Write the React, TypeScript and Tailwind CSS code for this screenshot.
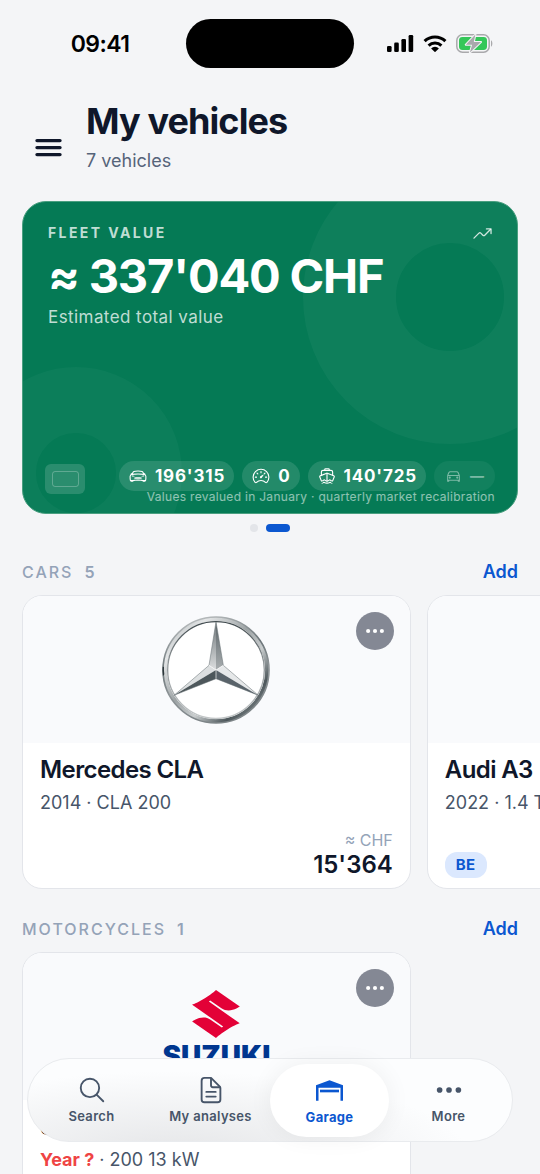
import type { ReactNode } from "react";
import {
  IoBoatOutline,
  IoCarOutline,
  IoCarSportOutline,
  IoDocumentTextOutline,
  IoEllipsisHorizontal,
  IoSearchOutline,
  IoSpeedometerOutline,
  IoTrendingUpOutline,
} from "react-icons/io5";
import { SiSuzuki } from "react-icons/si";

function StatusBar() {
  return (
    <div className="grid shrink-0 grid-cols-[1fr_168px_1fr] items-center pt-[19px] text-black">
      <span className="pl-[14px] text-center text-[23px] leading-7 font-semibold tracking-tight">09:41</span>
      <div className="h-[49px] rounded-full bg-black" />
      <div className="flex items-center justify-center gap-[9px] pr-[14px]">
        <svg className="h-[17px] w-[27px]" viewBox="0 0 27 17" fill="currentColor" aria-hidden="true">
          <rect x="0" y="11" width="4.6" height="6" rx="1.3" />
          <rect x="7.2" y="7.6" width="4.6" height="9.4" rx="1.3" />
          <rect x="14.4" y="4" width="4.6" height="13" rx="1.3" />
          <rect x="21.6" y="0" width="4.6" height="17" rx="1.3" />
        </svg>
        <svg className="h-[17px] w-6" viewBox="0 0 24 17" fill="none" stroke="currentColor" aria-hidden="true">
          <path d="M1.6 6.2a15 15 0 0 1 20.8 0" strokeWidth="3.1" />
          <path d="M5.6 10.6a9.2 9.2 0 0 1 12.8 0" strokeWidth="3" />
          <path d="M8.1 13.4a5.6 5.6 0 0 1 7.8 0L12 17.2Z" fill="currentColor" stroke="none" />
        </svg>
        <svg className="h-[19px] w-[37px]" viewBox="0 0 37 19" aria-hidden="true">
          <rect x="0.8" y="0.8" width="32.4" height="17.4" rx="5.6" fill="none" stroke="#a9a9ac" strokeWidth="1.5" />
          <path d="M35 6.3c1.8.8 1.8 5.6 0 6.4Z" fill="#a9a9ac" />
          <rect x="3" y="3" width="28" height="13" rx="3.4" fill="#34c759" />
          <path
            d="M19.4.6 9.8 10.7h6.3l-2.2 7.8L25 8h-7.2Z"
            fill="#a9a9ac"
            stroke="#f4f5f7"
            strokeWidth="2"
            strokeLinejoin="round"
            paintOrder="stroke"
          />
        </svg>
      </div>
    </div>
  );
}

function ValuePill({ icon, value, muted = false }: { icon: ReactNode; value: string; muted?: boolean }) {
  return (
    <li
      className={
        muted
          ? "flex h-[30px] items-center gap-2 rounded-full bg-white/5 px-[11px] text-sm font-bold text-white/45"
          : "flex h-[30px] items-center gap-2 rounded-full bg-white/12 pr-[9px] pl-[10px] text-[17px] font-bold tracking-wider text-white"
      }
    >
      {icon}
      <span className="leading-7">{value}</span>
    </li>
  );
}

function FleetCard() {
  return (
    <section className="relative flex h-[313px] flex-col overflow-hidden rounded-3xl border border-[#4a9f80] bg-[#057a55] pt-[20px] pr-[22px] pb-[10px] pl-[25px] text-white">
      <div className="absolute -top-[52px] -right-[80px] size-[294px] rounded-full border-[93px] border-white/4" />
      <div className="absolute -bottom-[66px] -left-[53px] size-[212px] rounded-full border-[66px] border-white/3" />
      <div className="relative flex items-center justify-between">
        <h2 className="text-sm leading-[22px] font-bold tracking-[2.4px] text-white/75">FLEET VALUE</h2>
        <IoTrendingUpOutline className="mr-[2px] size-[21px] text-white/80" />
      </div>
      <p className="relative mt-1 text-[47px] leading-[56px] font-bold tracking-tight whitespace-nowrap">≈ 337'040 CHF</p>
      <p className="relative mt-[1px] text-[17px] leading-6 tracking-wide text-white/75">Estimated total value</p>
      <div className="relative mt-auto flex items-start justify-between">
        <div className="-ml-[3px] mt-[3px] flex h-[30px] w-10 items-center justify-center rounded-md bg-white/15">
          <div className="h-4 w-[27px] rounded-[3px] border border-white/25" />
        </div>
        <div className="flex flex-col items-end">
          <ul className="flex gap-2">
            <ValuePill icon={<IoCarSportOutline className="size-[18px]" />} value="196'315" />
            <ValuePill icon={<IoSpeedometerOutline className="size-[18px]" />} value="0" />
            <ValuePill icon={<IoBoatOutline className="size-[18px]" />} value="140'725" />
            <ValuePill muted icon={<IoCarOutline className="size-[17px]" />} value="—" />
          </ul>
          <p className="text-xs leading-3 tracking-wide text-white/55">
            Values revalued in January · quarterly market recalibration
          </p>
        </div>
      </div>
    </section>
  );
}

function MercedesLogo() {
  return (
    <svg className="size-[108px]" viewBox="0 0 324 324" role="img" aria-label="Mercedes">
      <defs>
        <linearGradient id="ring" x1="0" y1="0" x2="1" y2="1">
          <stop offset="0" stopColor="#a5aaad" />
          <stop offset="0.2" stopColor="#e4e6e7" />
          <stop offset="0.45" stopColor="#9da3a5" />
          <stop offset="0.62" stopColor="#c9cdce" />
          <stop offset="0.8" stopColor="#4d575b" />
          <stop offset="1" stopColor="#a0a5a7" />
        </linearGradient>
        <linearGradient id="rim" x1="0" y1="0" x2="0.3" y2="1">
          <stop offset="0" stopColor="#c9cccd" />
          <stop offset="0.45" stopColor="#6b7478" />
          <stop offset="0.7" stopColor="#8f9598" />
          <stop offset="1" stopColor="#7e8588" />
        </linearGradient>
        <linearGradient id="inner" x1="0" y1="0" x2="0" y2="1">
          <stop offset="0" stopColor="#3f494d" />
          <stop offset="0.4" stopColor="#8d9396" />
          <stop offset="1" stopColor="#c3c7c8" />
        </linearGradient>
        <linearGradient id="armLeft" x1="0" y1="0" x2="0" y2="1">
          <stop offset="0" stopColor="#6d7578" />
          <stop offset="1" stopColor="#dcdedf" />
        </linearGradient>
        <linearGradient id="armRight" x1="0" y1="0" x2="0" y2="1">
          <stop offset="0" stopColor="#5b6468" />
          <stop offset="1" stopColor="#a9aeb0" />
        </linearGradient>
      </defs>
      <circle cx="162" cy="162" r="155" fill="#fff" stroke="url(#rim)" strokeWidth="13" />
      <circle cx="162" cy="162" r="152" fill="none" stroke="url(#ring)" strokeWidth="9" />
      <circle cx="162" cy="162" r="145" fill="none" stroke="url(#inner)" strokeWidth="4" />
      <path d="M2 152q-1 14 1 28l4-5q-2-12-1-22Z" fill="#2b3539" />
      <path d="M162 17 141 148 162 162Z" fill="url(#armLeft)" />
      <path d="M162 17 184 148 162 162Z" fill="url(#armRight)" />
      <path d="M36 238 141 148 162 162Z" fill="#dcdfe0" />
      <path d="M36 238 162 162V188Z" fill="#4d575b" />
      <path d="M289 238 184 148 162 162Z" fill="#e6e8e9" />
      <path d="M289 238 162 162V188Z" fill="#59636a" />
      <path d="M162 17 141 148 36 238 162 188 289 238 184 148Z" fill="none" stroke="#656e72" strokeWidth="1.5" />
      <path d="M141 148 162 162 184 148M162 162V188" fill="none" stroke="#fafafa" strokeWidth="2" />
    </svg>
  );
}

function SuzukiLogo() {
  return (
    <div className="flex flex-col items-center pt-[10px]">
      <SiSuzuki className="size-12 text-[#e30137]" aria-hidden="true" />
      <span className="text-[28px] leading-9 font-black text-[#00368f]">SUZUKI</span>
    </div>
  );
}

interface Vehicle {
  name: string;
  details: ReactNode;
  logo?: ReactNode;
  badge?: string;
  price?: string;
}

function VehicleCard({ vehicle }: { vehicle: Vehicle }) {
  return (
    <article className="flex h-[294px] w-[72vw] shrink-0 flex-col overflow-hidden rounded-[20px] border border-[#e3e5ea] bg-white">
      <div className="relative flex h-[147px] items-center justify-center bg-[#f9fafc]">
        {vehicle.logo}
        <button
          type="button"
          aria-label={`Options for ${vehicle.name}`}
          className="absolute top-4 right-4 flex size-[38px] items-center justify-center rounded-full bg-[#848894] text-white"
        >
          <IoEllipsisHorizontal className="size-[22px]" />
        </button>
      </div>
      <div className="flex flex-1 flex-col px-[17px] pt-3 pb-2">
        <h3 className="text-2xl leading-[30px] font-semibold tracking-tight whitespace-nowrap text-[#0f172a]">{vehicle.name}</h3>
        <p className="mt-1 text-lg leading-7 whitespace-nowrap text-[#475569]">{vehicle.details}</p>
        <div className="mt-auto flex items-end justify-between">
          {vehicle.badge ? (
            <span className="mb-[2px] rounded-xl bg-[#dbe8fe] px-[11px] text-[15px] leading-[26px] font-bold tracking-wide text-[#0b57d0]">
              {vehicle.badge}
            </span>
          ) : (
            <span />
          )}
          {vehicle.price && (
            <p className="flex flex-col items-end">
              <span className="text-base leading-5 text-[#94a3b8]">≈ CHF</span>
              <span className="text-2xl leading-[30px] font-semibold text-[#0f172a]">{vehicle.price}</span>
            </p>
          )}
        </div>
      </div>
    </article>
  );
}

function VehicleSection({ title, vehicles, count }: { title: string; vehicles: Vehicle[]; count: number }) {
  return (
    <section className="flex flex-col gap-[7px]">
      <div className="flex h-[33px] items-center justify-between px-[22px]">
        <h2 className="flex gap-[11px] text-base font-medium tracking-[2px] text-[#94a3b8]">
          <span>{title}</span>
          <span className="font-semibold">{count}</span>
        </h2>
        <button type="button" className="text-lg font-semibold text-[#0b57d0]">
          Add
        </button>
      </div>
      <div className="flex gap-4 overflow-x-auto px-[22px] [scrollbar-width:none]">
        {vehicles.map((v) => (
          <VehicleCard key={v.name} vehicle={v} />
        ))}
      </div>
    </section>
  );
}

const cars: Vehicle[] = [
  { name: "Mercedes CLA", details: "2014 · CLA 200", logo: <MercedesLogo />, price: "15'364" },
  { name: "Audi A3", details: "2022 · 1.4 T", badge: "BE" },
];

const motorcycles: Vehicle[] = [
  {
    name: "S",
    details: (
      <>
        <strong className="font-bold text-[#ef4444]">Year ?</strong> · 200 13 kW
      </>
    ),
    logo: <SuzukiLogo />,
  },
];

function GarageIcon() {
  return (
    <svg className="h-[21px] w-[27px]" viewBox="0 0 81 63" fill="currentColor" aria-hidden="true">
      <path d="M0 16 40.5 1 81 16V62H73.5V23H7.500V62H0Z" />
      <path d="M12 29H69V37H12Z" />
    </svg>
  );
}

function TabItem({ icon, label, active = false }: { icon: ReactNode; label: string; active?: boolean }) {
  return (
    <li>
      <a
        href="#"
        aria-current={active ? "page" : undefined}
        className={
          active
            ? "flex h-[73px] flex-col items-center justify-center rounded-full bg-white text-[#0b57d0] shadow-[0_0_24px_rgba(15,23,42,0.06)]"
            : "flex h-[73px] flex-col items-center justify-center rounded-full pb-[2px] text-[#475569]"
        }
      >
        <span className="flex h-8 items-center">{icon}</span>
        <span className={active ? "text-[13px] leading-5 font-bold tracking-wide" : "text-[13px] leading-5 font-semibold tracking-wide"}>{label}</span>
      </a>
    </li>
  );
}

function TabBar() {
  return (
    <nav className="absolute inset-x-[27px] bottom-8 rounded-full border border-[#e9ebee] bg-[#fcfdfe] bg-[radial-gradient(ellipse_at_30%_120%,#e4e5e7,transparent_62%)] px-1 pt-[5px] pb-1">
      <ul className="grid grid-cols-4">
        <TabItem icon={<IoSearchOutline className="size-[30px]" />} label="Search" />
        <TabItem icon={<IoDocumentTextOutline className="size-[30px]" />} label="My analyses" />
        <TabItem active icon={<GarageIcon />} label="Garage" />
        <TabItem icon={<IoEllipsisHorizontal className="size-[30px]" />} label="More" />
      </ul>
    </nav>
  );
}

export default function App() {
  return (
    <div className="relative flex h-dvh flex-col overflow-hidden bg-[#f4f5f7] font-['Inter','Liberation_Sans',sans-serif]">
      <StatusBar />
      <header className="flex shrink-0 items-end gap-6 px-[35px] pt-[30px]">
        <button type="button" aria-label="Menu" className="mb-[18px] text-[#0f172a]">
          <svg className="h-[20px] w-[27px]" viewBox="0 0 27 20" fill="none" stroke="currentColor" strokeWidth="3.4" strokeLinecap="round" aria-hidden="true">
            <path d="M2 2.6h23M2 9.6h23M2 16.600h23" />
          </svg>
        </button>
        <div>
          <h1 className="text-4xl leading-[46px] font-bold tracking-tight text-[#0f172a]">My vehicles</h1>
          <p className="mt-[3px] mb-[1px] text-lg leading-7 text-[#56647a]">7 vehicles</p>
        </div>
      </header>
      <main className="flex min-h-0 flex-1 flex-col gap-[23px] overflow-y-auto pt-[25px] [scrollbar-width:none]">
        <div className="flex shrink-0 flex-col gap-[10px] px-[22px]">
          <FleetCard />
          <div className="flex justify-center gap-2">
            <button type="button" aria-label="Slide 1" className="size-2 rounded-full bg-[#e3e5e9]" />
            <button type="button" aria-label="Slide 2" aria-current="true" className="h-2 w-6 rounded-full bg-[#0b57d0]" />
          </div>
        </div>
        <VehicleSection title="CARS" count={5} vehicles={cars} />
        <VehicleSection title="MOTORCYCLES" count={1} vehicles={motorcycles} />
      </main>
      <TabBar />
    </div>
  );
}
